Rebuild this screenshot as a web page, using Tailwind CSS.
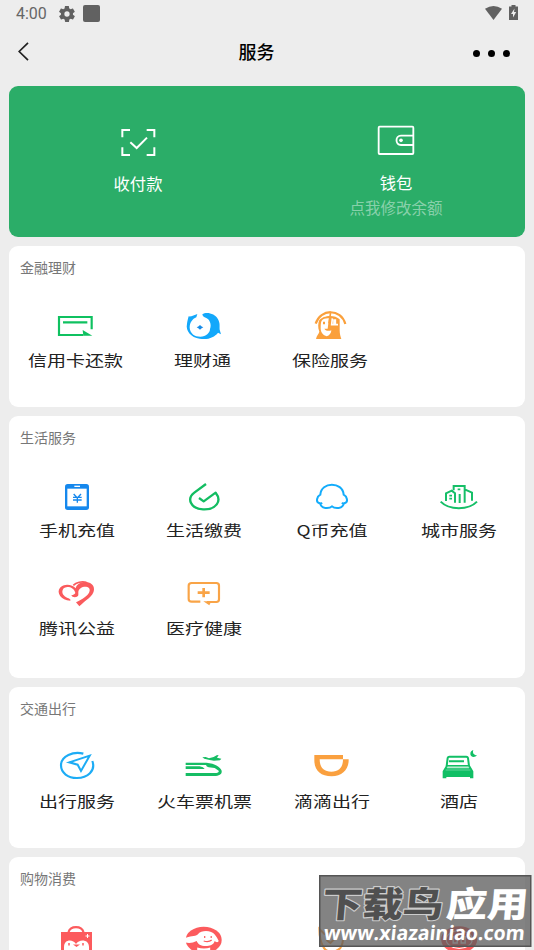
<!DOCTYPE html>
<html lang="zh-CN">
<head>
<meta charset="utf-8">
<title>服务</title>
<script src="https://cdn.jsdelivr.net/npm/@tailwindcss/browser@4"></script>
</head>
<body class="w-[534px] h-[950px] overflow-hidden bg-[#ededed] font-['Noto_Sans_CJK_SC',sans-serif] relative">
<div class="h-[28px] pl-[16px] pr-[16px] flex items-center text-[#666]">
  <span class="font-[Roboto] text-[16px] leading-[28px] w-[43px]">4:00</span>
  <svg class="w-[16px] h-[16px]" viewBox="2 2 20 20" fill="#616161"><path d="M19.4 13c0-.3.1-.6.1-1s0-.7-.1-1l2.1-1.6c.2-.2.2-.4.1-.6l-2-3.500c-.1-.2-.4-.3-.6-.2l-2.500 1c-.5-.4-1.100-.7-1.700-1l-.4-2.600c0-.3-.2-.5-.5-.5h-4c-.2 0-.4.2-.5.4l-.4 2.700c-.6.2-1.100.6-1.700 1l-2.500-1c-.2-.1-.5 0-.6.2l-2 3.500c-.1.2-.1.4.1.6L4.500 11c0 .3-.1.700-.1 1s0 .7.1 1l-2.100 1.600c-.2.2-.2.4-.1.6l2 3.500c.1.2.4.3.6.2l2.500-1c.5.4 1.100.7 1.700 1l.4 2.600c0 .3.2.5.5.5h4c.2 0 .5-.2.5-.4l.4-2.700c.6-.2 1.100-.6 1.700-1l2.500 1c.2.1.5 0 .6-.2l2-3.500c.1-.2.1-.4-.1-.6L19.400 13zM12 15.300a3.300 3.300 0 1 1 0-6.600 3.300 3.300 0 0 1 0 6.600z"/></svg>
  <div class="ml-[8px] w-[17px] h-[17px] rounded-[2px] bg-[#616161] mt-[-1px]"></div>
  <svg class="ml-auto w-[17px] h-[14px] mt-[-2px]" viewBox="0 0 17 14" fill="#616161"><path d="M0 2.700Q8.500-2.700 17 2.700L8.500 14z"/></svg>
  <svg class="ml-[7px] w-[9px] h-[15px] mt-[-3px]" viewBox="0 0 9 15"><path d="M2.500 0h4v1.500H9V15H0V1.500h2.500z" fill="#616161"/><path d="M5.500 3.500L2 9h2v3.500L7.200 7H5z" fill="#eee"/></svg>
</div>
<div class="h-[58px] pl-[18px] pr-[25px] flex items-start">
  <svg class="w-[36px] h-[20px] mt-[14px]" viewBox="0 0 36 20" fill="none" stroke="#222" stroke-width="1.700"><path d="M10 .8L1.200 9.500 10 18.200"/></svg>
  <h1 class="flex-1 text-center text-[18px] leading-[24px] font-medium mt-[11px] mr-[14px] text-black">服务</h1>
  <div class="flex gap-[8.500px] mt-[22px] w-[36px] shrink-0"><i class="w-[6.500px] h-[6.500px] shrink-0 rounded-full bg-black"></i><i class="w-[6.500px] h-[6.500px] shrink-0 rounded-full bg-black"></i><i class="w-[6.500px] h-[6.500px] shrink-0 rounded-full bg-black"></i></div>
</div>
<main class="h-[864px] overflow-hidden px-[9px] flex flex-col gap-[9px]">
  <section class="h-[151px] shrink-0 rounded-[9px] bg-[#2bad68] grid grid-cols-2 text-white text-[16.300px] leading-[24px]">
    <div class="flex flex-col items-center pt-[38px]">
      <svg class="w-[40px] h-[36px]" viewBox="84 42 120 108" fill="none" stroke="#fff" stroke-width="6"><path d="M97 82V60h23M170 60h23v22M193 112v23h-23M120 135H97v-23M121 97l19 17 31-31"/></svg>
      <span class="mt-[11px]">收付款</span>
    </div>
    <div class="flex flex-col items-center pt-[38px]">
      <svg class="w-[40px] h-[36px]" viewBox="138 42 120 108" fill="none" stroke="#fff" stroke-width="5.500"><rect x="146" y="50" width="104" height="82" rx="3"/><path d="M250 77h-37c-18 0-18 28 0 28h37"/><circle cx="213" cy="91" r="5.500" fill="#fff" stroke="none"/></svg>
      <span class="mt-[10px]">钱包</span>
      <span class="text-[15.500px] text-white/45 leading-[26px]">点我修改余额</span>
    </div>
  </section>

  <section class="h-[161px] shrink-0 rounded-[9px] bg-white">
    <h2 class="h-[65px] pl-[11px] pt-[11px] text-[14px] leading-[20px] text-[#777]">金融理财</h2>
    <div class="grid grid-cols-[repeat(4,127.300px)] pl-[3px] text-[15px] leading-[20px] text-[#222] whitespace-nowrap">
      <div class="flex flex-col items-center gap-[7px]"><svg class="w-[44px] h-[32px]" viewBox="162 213 132 96" fill="none" stroke="#0fc160" stroke-width="6.500"><path d="M275 268V231H177v54h73M189 247h73"/><path d="M248 270l29 17h-27z" fill="#0fc160" stroke="none"/></svg><span class="scale-x-[1.267]">信用卡还款</span></div>
      <div class="flex flex-col items-center gap-[7px]"><svg class="w-[44px] h-[32px]" viewBox="543 213 132 96"><path d="M566 229c8 1 18-4 26-7l-3 10c-12 5-20 16-20 31 1 17 15 27 32 27 17-1 29-11 29-23 6-14-2-29-11-33-8-2-11-5-12-11 12-8 38-3 47 15 7 12 4 22 5 31l4 14-9-5c-11 14-29 22-55 18-26-4-43-23-38-45 1-6 2-12 5-22z" fill="#13a8fb"/><path d="M590 262q5-2 10-7 5 5 10 7-5 3-10 7-5-5-10-7z" fill="#168be8"/></svg><span class="scale-x-[1.267]">理财通</span></div>
      <div class="flex flex-col items-center gap-[7px]"><svg class="w-[44px] h-[32px] overflow-visible" viewBox="123 63 132 96"><path d="M146 101c14-46 76-46 89 1" fill="none" stroke="#faa03c" stroke-width="6.500"/><path d="M157 90c11-14 46-18 61-2v33c0 12 3 20 5 26h-76c2-10 8-15 10-22-5-13-4-25 0-35z" fill="#faa03c"/><path d="M164 92c5-6 14-8 22-7l-4 31h-10c4 7 14 8 21 5 0 9-6 16-14 18-10-3-18-11-18-24 0-9 0-17 3-23z" fill="#fff"/><path d="M196 85l-2 19h7V88M205 88v16h8" fill="none" stroke="#fff" stroke-width="5"/><path d="M168 99h6" stroke="#faa03c" stroke-width="7"/><path d="M191 66l-5 34" stroke="#faa03c" stroke-width="5"/></svg><span class="scale-x-[1.267]">保险服务</span></div>
    </div>
  </section>

  <section class="h-[262px] shrink-0 rounded-[9px] bg-white">
    <h2 class="h-[65px] pl-[11px] pt-[11px] text-[14px] leading-[20px] text-[#777]">生活服务</h2>
    <div class="grid grid-cols-[repeat(4,127.300px)] gap-y-[39px] pl-[4.500px] text-[15px] leading-[20px] text-[#222] whitespace-nowrap">
      <div class="flex flex-col items-center gap-[7px]"><svg class="w-[44px] h-[32px]" viewBox="165 33 132 96"><rect x="195" y="42" width="72" height="78" rx="8" fill="#1688ed"/><path d="M202 56h58v53h-58z" fill="#fff"/><path d="M223 49h17" stroke="#fff" stroke-width="4"/><path d="M221 72l11 12 11-12M232 84v14M219 82h26M219 90h26" fill="none" stroke="#1688ed" stroke-width="4"/></svg><span class="scale-x-[1.267]">手机充值</span></div>
      <div class="flex flex-col items-center gap-[7px]"><svg class="w-[44px] h-[32px]" viewBox="547 33 132 96" fill="none" stroke="#13bd62" stroke-width="7" stroke-linejoin="round"><path d="M619 42l-35 26c-24 18-11 48 26 50 39 2 58-25 38-50l-36 26-14-10"/></svg><span class="scale-x-[1.267]">生活缴费</span></div>
      <div class="flex flex-col items-center gap-[7px]"><svg class="w-[44px] h-[32px]" viewBox="129 33 132 96" fill="none" stroke="#13acfb" stroke-width="6"><path d="M165 98q-3 4-9 1c-10-3-7-19 4-25 2-40 67-40 70 0 11 6 14 22 4 25q-6 3-9-1M161 98c-2 8 4 15 14 16 9 1 18-3 20-5 2 2 11 6 20 5 10-1 16-8 14-16"/></svg><span class="scale-x-[1.267]">Q币充值</span></div>
      <div class="flex flex-col items-center gap-[7px]"><svg class="w-[44px] h-[32px]" viewBox="510 33 132 96" fill="none" stroke="#16bf68" stroke-width="6"><path d="M521 95c25 26 84 26 109 0M537 93V70l17-8 10 8v28M560 61V48h33v50M578 99V72M593 58l22 10v24"/><path d="M547 77h8M547 86h8M572 58h8" stroke-width="5"/></svg><span class="scale-x-[1.267]">城市服务</span></div>
      <div class="flex flex-col items-center gap-[7px]"><svg class="w-[44px] h-[32px]" viewBox="165 27 132 96"><path d="M211 92c-28-1-43-25-31-39 11-13 37-11 47 2 6-26 57-25 55 4-1 20-26 31-44 50l-10-12c17-9 39-20 41-35 3-18-34-15-34 5v9c-3 8-19 7-21 0 6-1 9-3 12-7-5-20-32-23-38-9-4 11 5 19 13 23 6 3 12 3 10 9z" fill="#fa5b5d"/><path d="M220 46c8-9 26-13 39-9" fill="none" stroke="#fa5b5d" stroke-width="5"/></svg><span class="scale-x-[1.267]">腾讯公益</span></div>
      <div class="flex flex-col items-center gap-[7px]"><svg class="w-[44px] h-[32px]" viewBox="547 27 132 96" fill="none" stroke="#f9a447" stroke-width="6.500"><path d="M602 95h-26c-6 0-9-4-9-8V47c0-5 4-8 9-8h74c5 0 8 3 8 8v41c0 5-3 8-8 8h-28"/><path d="M594 68h36M612 54v28" stroke-width="8"/><path d="M611 94h24l-6 12z" fill="#f9a447" stroke="none"/></svg><span class="scale-x-[1.267]">医疗健康</span></div>
    </div>
  </section>

  <section class="h-[161px] shrink-0 rounded-[9px] bg-white">
    <h2 class="h-[65px] pl-[11px] pt-[11px] text-[14px] leading-[20px] text-[#777]">交通出行</h2>
    <div class="grid grid-cols-[repeat(4,127.300px)] pl-[4.500px] text-[15px] leading-[20px] text-[#222] whitespace-nowrap">
      <div class="flex flex-col items-center gap-[7px]"><svg class="w-[44px] h-[32px] overflow-visible" viewBox="165 36 132 96" fill="none" stroke="#1dacf5" stroke-width="6.500"><path d="M250 41c-30-8-67 7-67 35 0 23 21 38 48 38 31 0 57-21 46-51"/><path d="M269 47l-61 20 25 7 10 19z" stroke-width="6"/></svg><span class="scale-x-[1.267]">出行服务</span></div>
      <div class="flex flex-col items-center gap-[7px]"><svg class="w-[44px] h-[32px] overflow-visible" viewBox="547 36 132 96" fill="#16bd64"><path d="M558 68h62c27 2 43 14 46 24 2 11-9 16-22 16h-86v-9h86c10 0 15-3 13-7l-12-8-18-2q-7-2-8-7h-61z"/><path d="M558 79h42q12 2 15 8h-57zM608 52l10-1 10 4 14-4 9-5 6-1-5 8 13 3-4 5-18 1-13-2-16-4z"/></svg><span class="scale-x-[1.267]">火车票机票</span></div>
      <div class="flex flex-col items-center gap-[7px]"><svg class="w-[44px] h-[32px] overflow-visible" viewBox="129 36 132 96"><path d="M142 45h86v13h-70c0 25 13 37 35 37 23 0 35-13 35-37h17c1 30-19 51-51 51-33 0-52-18-52-48z" fill="#faa03f"/></svg><span class="scale-x-[1.267]">滴滴出行</span></div>
      <div class="flex flex-col items-center gap-[7px]"><svg class="w-[44px] h-[32px] overflow-visible" viewBox="510 36 132 96"><path d="M539 78l3-24q1-4 5-4h51q4 0 5 4l3 24M546 64h45" fill="none" stroke="#11bf65" stroke-width="6"/><path d="M538 75h70l11 19v21h-10v-4h-71v4h-11V94z" fill="#11bf65"/><path d="M542 80h62l2 4h-66zM536 90h74" fill="#b8ecd0" stroke="#b8ecd0" stroke-width="1.500"/><path d="M619 30c-3 9 1 15 11 16-8 9-21 4-20-5 0-6 4-10 9-11z" fill="#11bf65"/></svg><span class="scale-x-[1.267]">酒店</span></div>
    </div>
  </section>

  <section class="h-[161px] shrink-0 rounded-[9px] bg-white">
    <h2 class="h-[65px] pl-[11px] pt-[11px] text-[14px] leading-[20px] text-[#777]">购物消费</h2>
    <div class="grid grid-cols-[repeat(4,127.300px)] pl-[4.500px]">
      <svg class="w-[44px] h-[32px] justify-self-center" viewBox="55 922 44 32"><path d="M68.500 933c2-6.500 13-6.500 15 0" transform="translate(0 -1)" fill="none" stroke="#fc5b5d" stroke-width="2.200"/><path d="M61 932h31v20H61z" fill="#fc5b5d"/><path d="M64 950v-3c0-8 9-8 12-3 3-5 13-5 13 3v3z" fill="#fff"/><path d="M69 945.500v-2.500M83 945.500v-2.500" stroke="#fc5b5d" stroke-width="1.500"/><path d="M73 944.500h7l-3.500 2.500z" fill="#fc5b5d"/><path d="M87.500 934v4M85.500 936h4" stroke="#fff" stroke-width="1"/></svg>
      <svg class="w-[44px] h-[32px] justify-self-center" viewBox="182.300 922 44 32"><ellipse cx="204" cy="940" rx="18" ry="13.300" fill="#fc5b5d"/><path d="M185 938.500c5-3 10-1.500 13-4 4-5 14-4 17 0 1.500 2 3 4 4 6.500-1 2-3 1-4 0-1 4-5 5-9 5-5 0-8-2-9-5-4 2-7 2.500-12 1.500z" fill="#fff"/><path d="M205 938v-2M211.500 938v-2M204 941q5 1.500 8-1" fill="none" stroke="#fc5b5d" stroke-width="1.200"/><path d="M197.500 947.500q7 2 13 0v5h-13z" fill="#fff"/></svg>
      <svg class="w-[44px] h-[32px] justify-self-center" viewBox="309.600 922 44 32" fill="none" stroke="#f9a447" stroke-width="2"><path d="M319 929l5 5q8-6 13-2l5-2q2 12-2 18c-5 5-14 5-17-1-3-5-4-12-4-18zM326 940l4 3 5-5"/></svg>
      <svg class="w-[44px] h-[32px] justify-self-center" viewBox="436.800 922 44 32"><ellipse cx="459" cy="939.500" rx="18" ry="13.300" fill="#fc5b5d"/><ellipse cx="459" cy="939.500" rx="13" ry="9" fill="none" stroke="#fff" stroke-width="1.200"/><path d="M453 936v7h4v-7M461 936v7h4v-7" fill="none" stroke="#fff" stroke-width="1.500"/></svg>
    </div>
  </section>
</main>
<!-- Translucent site badge over the lower right corner -->
<svg class="absolute left-[319px] top-[875px] w-[213px] h-[72px]" viewBox="0 0 213 72">
  <rect x=".75" y=".75" width="211" height="70.500" fill="#5c5c5c" fill-opacity=".76" stroke="#555" stroke-width="1.500"/>
  <g class="font-['Noto_Sans_CJK_SC',sans-serif] font-black" font-size="35" transform="skewX(-5)">
    <text x="6" y="42" textLength="121" lengthAdjust="spacingAndGlyphs" fill="#505050" stroke="#ccc" stroke-width="2.200" paint-order="stroke" stroke-linejoin="round">下载鸟</text>
    <text x="130" y="42" textLength="82" lengthAdjust="spacingAndGlyphs" fill="#fff">应用</text>
  </g>
  <text class="font-['Open_Sans',sans-serif] font-bold" x="11" y="65" font-size="20" textLength="201" lengthAdjust="spacingAndGlyphs" fill="#fff" transform="skewX(-6)">www.xiazainiao.com</text>
</svg>
</body>
</html>
